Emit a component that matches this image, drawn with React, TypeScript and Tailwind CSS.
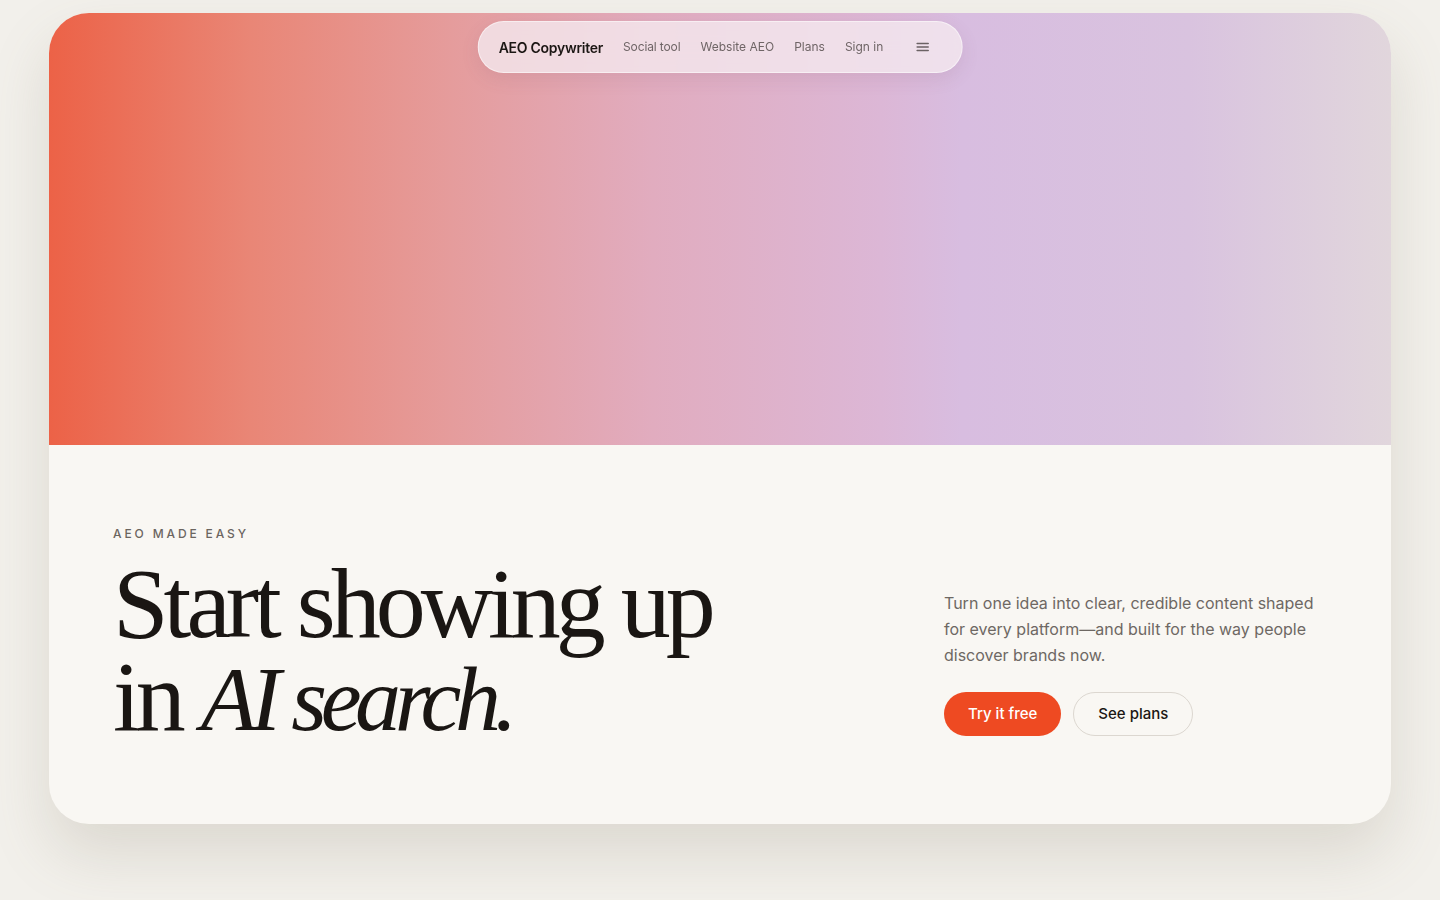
import React from "react";

export default function App() {
  return (
    <div className="min-h-screen w-full bg-[#f2f0eb] px-[49px] pt-[13px] pb-[76px]" style={{ fontFamily: "Inter, 'Noto Sans', sans-serif" }}>
      <div className="relative w-full overflow-hidden rounded-[40px] bg-[#f9f7f3] shadow-[0_30px_60px_rgba(120,110,90,0.18)]">
        <div className="relative h-[432px] w-full bg-[linear-gradient(90deg,#ec6247_0%,#e98676_15%,#e59c9c_30%,#e1acbf_45%,#dcb7d6_62%,#d8bde0_68%,#d9c3df_85%,#e1d6dc_100%)]">
          <div className="absolute left-1/2 top-[8px] flex h-[52px] -translate-x-1/2 items-center rounded-full border border-white/50 bg-[rgba(245,235,240,0.78)] pl-[20px] pr-[32px] shadow-[0_6px_18px_rgba(120,80,100,0.12)] backdrop-blur-md">
            <span className="text-[14px] font-semibold tracking-[-0.02em] text-[#1c1714]">AEO Copywriter</span>
            <nav className="ml-[20px] flex items-center gap-[20px] text-[12px] text-[#6f6566]">
              <span className="tracking-[-0.01em]">Social tool</span>
              <span>Website AEO</span>
              <span>Plans</span>
              <span>Sign in</span>
            </nav>
            <svg className="ml-[32px]" width="14" height="14" viewBox="0 0 14 14" fill="none">
              <path d="M1.5 3.5h11M1.5 7h11M1.5 10.5h11" stroke="#6b6264" strokeWidth="1.6" strokeLinecap="round" />
            </svg>
          </div>
        </div>
        <div className="flex h-[379px] items-start justify-between pl-[64px] pr-[67px] pt-[80px]">
          <div className="flex flex-col">
            <div className="text-[12px] font-medium tracking-[0.24em] text-[#6b6560]">AEO MADE EASY</div>
            <h1 className="mt-[14px] text-[100px] leading-[93px] tracking-[-0.05em] text-[#1a1613]" style={{ fontFamily: "'Liberation Serif', 'Times New Roman', serif" }}>
              <span className="block">Start showing up</span>
              <span className="block">in <em className="text-[92px] italic tracking-[-0.07em]">AI search.</em></span>
            </h1>
          </div>
          <div className="mt-[65px] flex w-[380px] flex-col">
            <p className="text-[16px] leading-[26px] text-[#6e6863]">
              Turn one idea into clear, credible content shaped for every platform—and built for the way people discover brands now.
            </p>
            <div className="mt-[24px] flex items-center gap-[12px]">
              <button className="h-[44px] rounded-full bg-[#ee4a22] px-[24px] text-[15px] font-medium text-white">Try it free</button>
              <button className="h-[44px] rounded-full border border-[#dcd7d0] bg-transparent px-[24px] text-[15px] font-medium text-[#1c1714]">See plans</button>
            </div>
          </div>
        </div>
      </div>
    </div>
  );
}
